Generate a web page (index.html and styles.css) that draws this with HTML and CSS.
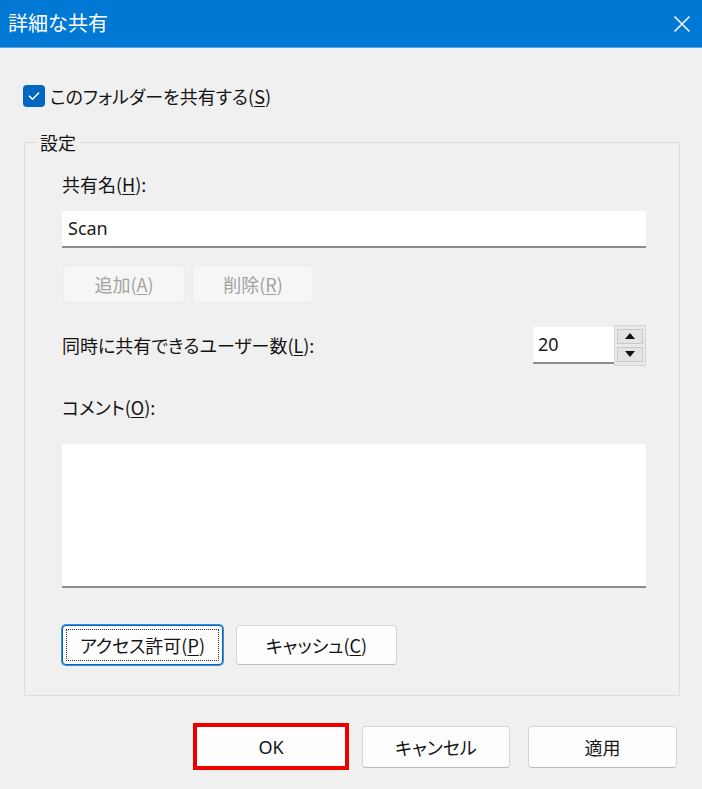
FILE: index.html
```html
<!DOCTYPE html>
<html lang="ja">
<head>
<meta charset="utf-8">
<title>詳細な共有</title>
<link rel="stylesheet" href="styles.css">
</head>
<body>
<div class="titlebar">
  <span class="title">詳細な共有</span>
  <svg class="close" width="18" height="18" viewBox="0 0 18 18"><path d="M1.5 1.5 L16.5 16.5 M16.5 1.5 L1.5 16.5" stroke="#fff" stroke-width="1.5" fill="none"/></svg>
</div>
<div class="main">
  <div class="check-row">
    <span class="checkbox"><svg width="22" height="22" viewBox="0 0 22 22"><path d="M6.5 11.2 L9.6 14.2 L15.6 8" stroke="#fff" stroke-width="1.6" fill="none" stroke-linecap="round" stroke-linejoin="round"/></svg></span>
    <span class="check-label">このフォルダーを共有する(<u>S</u>)</span>
  </div>
  <fieldset class="group">
    <legend>設定</legend>
    <div class="group-body">
      <div class="label first">共有名(<u>H</u>):</div>
      <div class="input name-input">Scan</div>
      <div class="btn-row small-row">
        <div class="btn disabled">追加(<u>A</u>)</div>
        <div class="btn disabled">削除(<u>R</u>)</div>
      </div>
      <div class="spin-row">
        <span class="label">同時に共有できるユーザー数(<u>L</u>):</span>
        <div class="spin">
          <div class="input spin-input">20</div>
          <div class="spin-btns">
            <div class="spin-btn"><svg width="10" height="6" viewBox="0 0 10 6"><path d="M0 6 L5 0 L10 6 Z" fill="#111"/></svg></div>
            <div class="spin-btn"><svg width="10" height="6" viewBox="0 0 10 6"><path d="M0 0 L5 6 L10 0 Z" fill="#111"/></svg></div>
          </div>
        </div>
      </div>
      <div class="label comment-label">コメント(<u>O</u>):</div>
      <div class="input textarea"></div>
      <div class="btn-row big-row">
        <div class="btn big focused">アクセス許可(<u>P</u>)</div>
        <div class="btn big">キャッシュ(<u>C</u>)</div>
      </div>
    </div>
  </fieldset>
  <div class="footer">
    <div class="btn foot ok">OK</div>
    <div class="btn foot cancel">キャンセル</div>
    <div class="btn foot apply">適用</div>
  </div>
</div>
</body>
</html>
```
FILE: styles.css
```css
html, body {
  margin: 0;
  padding: 0;
}
body {
  width: 702px;
  height: 789px;
  overflow: hidden;
  background: #f0f0f0;
  font-family: "Noto Sans CJK JP", "Noto Sans", sans-serif;
  font-feature-settings: "palt";
  color: #141414;
  font-size: 18px;
}
u {
  text-decoration: underline;
  text-underline-offset: 2px;
  text-decoration-thickness: 1px;
}
.titlebar {
  height: 48px;
  background: #0078d4;
  border-bottom: 1px solid #5ba4e0;
  box-sizing: border-box;
  display: flex;
  align-items: center;
  justify-content: space-between;
  padding: 0 11px 2px 8px;
  color: #fff;
}
.title {
  font-size: 20px;
  line-height: 24px;
  font-feature-settings: normal;
}
.close {
  display: block;
  margin-top: 2px;
}
.main {
  padding: 0 0 0 23px;
}
.check-row {
  margin-top: 36px;
  height: 24px;
  display: flex;
  align-items: center;
}
.checkbox {
  width: 22px;
  height: 22px;
  background: #0067c0;
  border-radius: 4px;
  display: block;
}
.checkbox svg {
  display: block;
}
.check-label {
  margin-left: 5px;
  line-height: 24px;
}
.group {
  margin: 22px 0 0 1px;
  padding: 0;
  width: 656px;
  box-sizing: border-box;
  border: 1px solid #dcdcdc;
  border-radius: 2px;
}
.group legend {
  margin-left: 12px;
  padding: 0 3px;
  line-height: 24px;
}
.group-body {
  padding: 0 33px 30px 37px;
}
.label {
  line-height: 24px;
}
.label.first {
  margin-top: 18px;
}
.input {
  background: #fff;
  border-bottom: 2px solid #8c8c8c;
  box-sizing: border-box;
  color: #1a1a1a;
}
.name-input {
  margin-top: 15px;
  height: 37px;
  line-height: 35px;
  padding-left: 6px;
  font-size: 18px;
  font-family: "Noto Sans", "Noto Sans CJK JP", sans-serif;
}
.btn-row {
  display: flex;
}
.small-row {
  margin-top: 17px;
  gap: 7px;
  padding-left: 1px;
}
.btn {
  box-sizing: border-box;
  display: flex;
  align-items: center;
  justify-content: center;
  border-radius: 4px;
  background: #fdfdfd;
  border: 1px solid #d6d6d6;
  border-bottom-color: #bdbdbd;
  color: #141414;
  position: relative;
  line-height: 24px;
}
.btn.disabled {
  width: 122px;
  height: 38px;
  background: #f6f6f6;
  border-color: #ececec;
  color: #a2a2a2;
}
.spin-row {
  margin-top: 22px;
  height: 40px;
  display: flex;
  align-items: center;
  justify-content: space-between;
}
.spin {
  display: flex;
  align-items: center;
}
.spin-input {
  width: 81px;
  height: 37px;
  line-height: 35px;
  padding-left: 5px;
  font-size: 18px;
  font-family: "Noto Sans", sans-serif;
}
.spin-btns {
  width: 32px;
  height: 41px;
  box-sizing: border-box;
  border: 1px solid #d4d4d4;
  background: #e9e9e9;
  padding: 3px 2px;
  display: flex;
  flex-direction: column;
  gap: 3px;
}
.spin-btn {
  flex: 1;
  background: #e4e4e4;
  border: 1px solid #c9c9c9;
  display: flex;
  align-items: center;
  justify-content: center;
}
.spin-btn svg {
  display: block;
}
.comment-label {
  margin-top: 30px;
}
.textarea {
  margin-top: 25px;
  height: 144px;
}
.big-row {
  margin-top: 37px;
  gap: 13px;
}
.btn.big {
  width: 161px;
  height: 40px;
}
.btn.focused {
  border: 1px solid #0067c0;
  box-shadow: 0 0 0 1px #3f8fd6;
}
.btn.focused::after {
  content: "";
  position: absolute;
  inset: 3px;
  border: 1px dotted #333;
  border-radius: 1px;
}
.footer {
  margin-top: 27px;
  display: flex;
  align-items: center;
  padding-left: 170px;
}
.btn.foot {
  height: 42px;
}
.btn.ok {
  width: 156px;
  height: 47px;
  border: 4px solid #ee0000;
  border-radius: 0;
  background: #fefefe;
  font-size: 18px;
  font-family: "Noto Sans", sans-serif;
}
.btn.cancel {
  width: 148px;
  margin-left: 13px;
}
.btn.apply {
  width: 149px;
  margin-left: 18px;
}
```
